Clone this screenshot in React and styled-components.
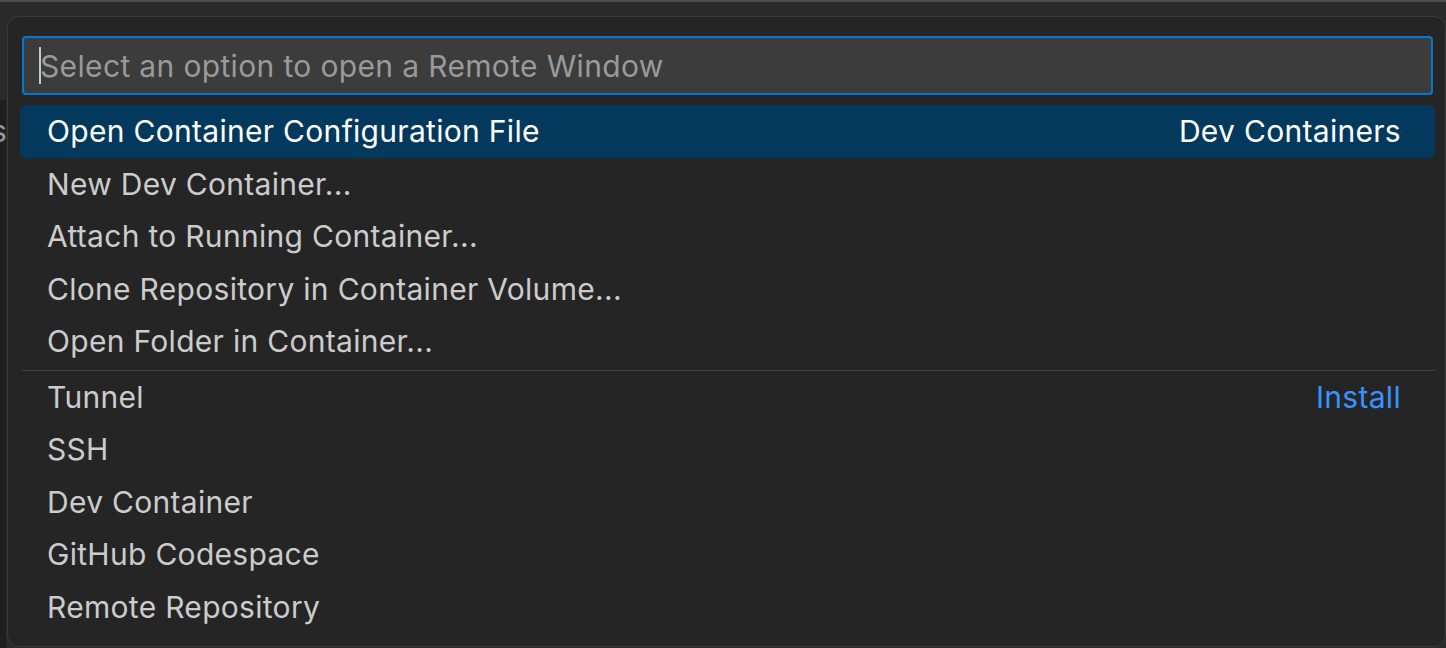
import React from "react";
import styled, { createGlobalStyle } from "styled-components";

const GlobalStyle = createGlobalStyle`
    html, body {
        margin: 0;
        padding: 0;
        background: #2b2b2b;
        font-family: Inter, "Noto Sans", "Liberation Sans", sans-serif;
        -webkit-font-smoothing: antialiased;
    }
`;

const Page = styled.div`
    width: 1446px;
    height: 648px;
    overflow: hidden;
    display: flex;
    flex-direction: column;
    background: #2b2b2b;
    border-top: 2px solid #4e4e4e;
    box-sizing: border-box;
`;

const Stage = styled.div`
    flex: 1;
    display: flex;
    padding-top: 14px;
`;

const Gutter = styled.div`
    width: 7px;
    margin-top: -14px;
    display: flex;
    flex-direction: column;
    overflow: hidden;
`;

const GutterTop = styled.div`
    height: 98px;
    background: #2b2b2b;
`;

const GutterBody = styled.div`
    flex: 1;
    background: #1f1f1f;
    border-right: 1px solid #2a2a2a;
    color: #9a9a9a;
    font-size: 30px;
    line-height: 1;
    padding-top: 16px;
    text-indent: -9px;
    white-space: nowrap;
`;

const Panel = styled.div`
    flex: 1;
    background: #252526;
    border: 1px solid #3a3a3b;
    border-radius: 12px;
    padding: 19px 10px 0 12px;
    display: flex;
    flex-direction: column;
    margin-bottom: 1px;
`;

const InputBox = styled.div`
    height: 59px;
    margin: 0 2px 10px 2px;
    box-sizing: border-box;
    border: 2px solid #0078d4;
    border-radius: 4px;
    background: #3c3c3c;
    display: flex;
    align-items: center;
    padding-left: 15px;
`;

const Caret = styled.span`
    width: 2px;
    height: 37px;
    background: #c8c8c8;
    margin-right: -1px;
`;

const Placeholder = styled.span`
    color: #9a9a9a;
    font-size: 30px;
    letter-spacing: 0.35px;
`;

const List = styled.div`
    display: flex;
    flex-direction: column;
`;

const Row = styled.div`
    height: 52.5px;
    display: flex;
    align-items: center;
    justify-content: space-between;
    padding: 0 34px 0 27px;
    border-radius: 6px;
    background: ${(p) => (p.$active ? "#04395e" : "transparent")};
    color: ${(p) => (p.$active ? "#ffffff" : "#cccccc")};
    font-size: 30px;
    letter-spacing: 0.3px;
`;

const Separator = styled.div`
    height: 1px;
    margin: 2px 0 0 2px;
    background: #454545;
`;

const Detail = styled.span`
    color: ${(p) => (p.$link ? "#3794ff" : "inherit")};
`;

const devItems = [
    { label: "Open Container Configuration File", detail: "Dev Containers", active: true },
    { label: "New Dev Container..." },
    { label: "Attach to Running Container..." },
    { label: "Clone Repository in Container Volume..." },
    { label: "Open Folder in Container..." },
];

const remoteItems = [
    { label: "Tunnel", detail: "Install", link: true },
    { label: "SSH" },
    { label: "Dev Container" },
    { label: "GitHub Codespace" },
    { label: "Remote Repository" },
];

const Item = ({ item }) => (
    <Row $active={item.active}>
        <span>{item.label}</span>
        {item.detail && <Detail $link={item.link}>{item.detail}</Detail>}
    </Row>
);

const App = () => {
    return (
        <>
            <GlobalStyle />
            <Page>
                <Stage>
                    <Gutter>
                        <GutterTop />
                        <GutterBody>s</GutterBody>
                    </Gutter>
                    <Panel>
                        <InputBox>
                            <Caret />
                            <Placeholder>Select an option to open a Remote Window</Placeholder>
                        </InputBox>
                        <List>
                            {devItems.map((item) => (
                                <Item key={item.label} item={item} />
                            ))}
                        </List>
                        <Separator />
                        <List>
                            {remoteItems.map((item) => (
                                <Item key={item.label} item={item} />
                            ))}
                        </List>
                    </Panel>
                </Stage>
            </Page>
        </>
    );
};

export default App;
